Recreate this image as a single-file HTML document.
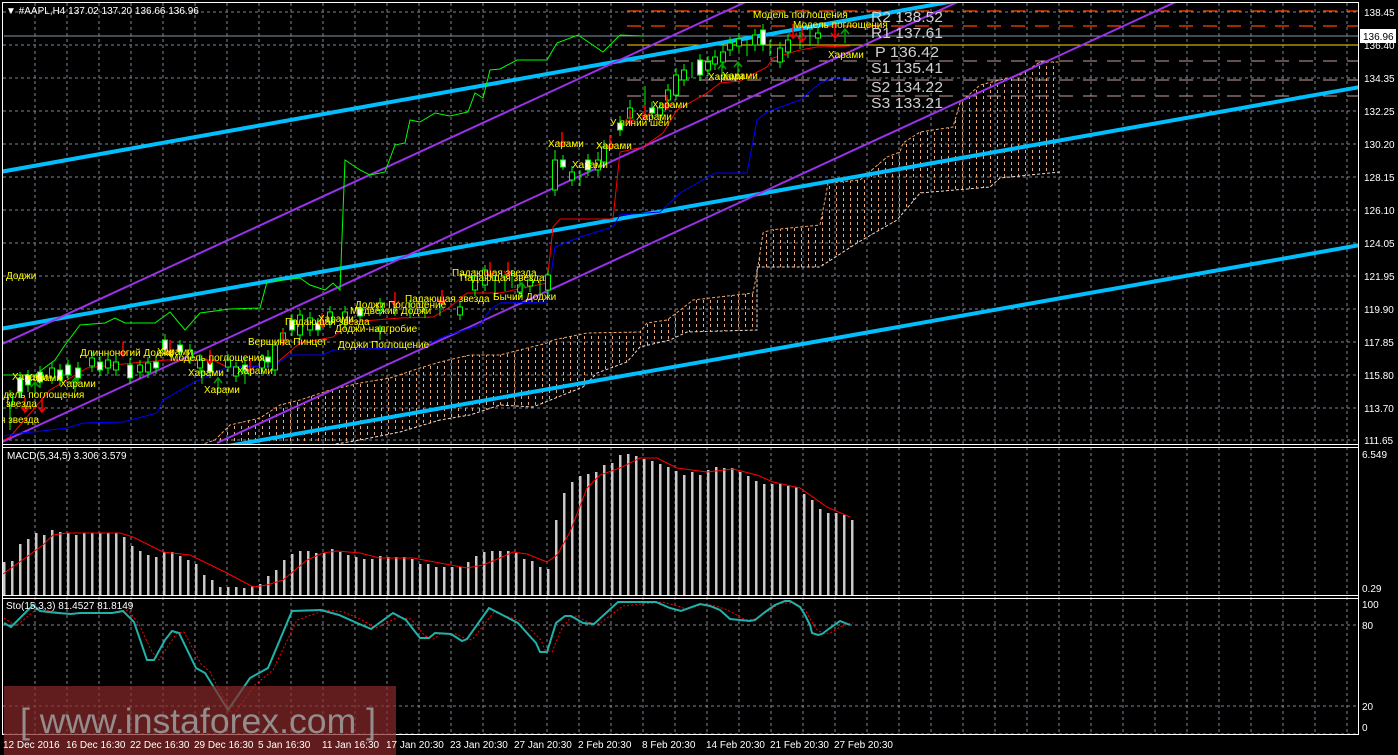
<!DOCTYPE html>
<html><head><meta charset="utf-8"><style>
html,body{margin:0;padding:0;background:#000;}
svg{display:block}
text{font-family:"Liberation Sans",sans-serif;}
</style></head><body>
<svg width="1398" height="755" viewBox="0 0 1398 755" xmlns="http://www.w3.org/2000/svg">
<defs>
<pattern id="cl" patternUnits="userSpaceOnUse" width="7" height="6"><rect x="3" y="0" width="1" height="3" fill="#e8a878"/></pattern>
<clipPath id="mainclip"><rect x="3" y="3" width="1355" height="441"/></clipPath>
</defs>
<rect width="1398" height="755" fill="#000"/>

<!-- grid -->
<g stroke="#7c8696" stroke-width="1" stroke-dasharray="3,3" fill="none">
<path d="M35 3V734M67 3V734M99 3V734M131 3V734M163 3V734M195 3V734M227 3V734M259 3V734M291 3V734M323 3V734M355 3V734M387 3V734M419 3V734M451 3V734M483 3V734M515 3V734M547 3V734M579 3V734M611 3V734M643 3V734M675 3V734M707 3V734M739 3V734M771 3V734M803 3V734M835 3V734M867 3V734M899 3V734M931 3V734M963 3V734M995 3V734M1027 3V734M1059 3V734M1091 3V734M1123 3V734M1155 3V734M1187 3V734M1219 3V734M1251 3V734M1283 3V734M1315 3V734M1347 3V734"/>
<path d="M3 12H1358M3 45H1358M3 78H1358M3 111H1358M3 144H1358M3 177H1358M3 210H1358M3 243H1358M3 276H1358M3 309H1358M3 342H1358M3 375H1358M3 408H1358M3 440H1358"/>
<path d="M3 625H1358M3 706H1358M3 734H1358"/>
</g>

<g clip-path="url(#mainclip)">
<polygon fill="url(#cl)" points="200,445 215,440 230,425 260,418 280,405 300,400 330,390 360,383 390,378 420,368 440,362 470,355 500,355 547,343 553,340 587,333 640,332 647,323 667,320 683,308 693,300 753,293 757,273 763,233 770,230 820,225 825,200 828,183 860,180 887,157 900,152 903,143 920,132 953,127 960,103 980,85 1000,80 1020,75 1040,62 1060,62 1060,172 1000,178 990,187 920,193 897,220 857,243 820,267 757,267 757,330 687,332 670,340 640,347 627,362 597,373 583,387 533,407 500,405 470,415 440,420 400,432 360,440 330,445"/>
<polyline fill="none" stroke="#f4a460" stroke-dasharray="3,2" points="200,445 215,440 230,425 260,418 280,405 300,400 330,390 360,383 390,378 420,368 440,362 470,355 500,355 547,343 553,340 587,333 640,332 647,323 667,320 683,308 693,300 753,293 757,273 763,233 770,230 820,225 825,200 828,183 860,180 887,157 900,152 903,143 920,132 953,127 960,103 980,85 1000,80 1020,75 1040,62 1060,62"/>
<polyline fill="none" stroke="#f0d8d0" stroke-dasharray="3,2" points="1060,172 1000,178 990,187 920,193 897,220 857,243 820,267 757,267 757,330 687,332 670,340 640,347 627,362 597,373 583,387 533,407 500,405 470,415 440,420 400,432 360,440 330,445"/>

<path d="M627 11H1358M627 26H1358" stroke="#ff4500" stroke-width="1.3" stroke-dasharray="14,10"/>
<path d="M4 36H1358" stroke="#8494a4" stroke-width="1"/>
<path d="M627 45H1358" stroke="#ffd700" stroke-width="1"/>
<path d="M627 61H1358M627 80H1358M627 96H1358" stroke="#c8a0a0" stroke-width="1" stroke-dasharray="14,10"/>

<g stroke="#00bfff" stroke-width="4" fill="none">
<line x1="0" y1="172" x2="960" y2="0"/>
<line x1="0" y1="329" x2="1360" y2="87"/>
<line x1="228" y1="446" x2="1360" y2="245"/>
</g>
<g stroke="#9932e8" stroke-width="2" fill="none">
<line x1="0" y1="345" x2="750" y2="0"/>
<line x1="0" y1="443" x2="962" y2="0"/>
<line x1="217" y1="443" x2="1180" y2="0"/>
</g>

<polyline fill="none" stroke="#00ff00" stroke-width="1" points="4,375 35,375 55,360 65,345 80,325 105,323 115,318 125,323 155,323 170,312 185,330 200,313 230,309 260,308 267,282 300,278 310,285 325,290 333,283 340,290 345,160 360,170 370,175 385,172 395,145 405,143 410,120 420,122 435,113 450,116 468,112 475,93 483,98 490,70 500,69 517,60 547,60 557,43 578,35 603,52 620,35 643,36"/>
<polyline fill="none" stroke="#ff0000" stroke-width="1" points="4,440 10,437 33,410 50,390 87,368 133,363 167,360 213,360 227,367 273,366 300,343 333,337 350,322 400,318 433,317 450,307 467,293 500,293 547,283 553,227 560,219 613,219 620,152 643,147 663,133 677,110 707,93 720,83 740,81 767,67 773,58 800,50 817,47 850,46"/>
<polyline fill="none" stroke="#0000ff" stroke-width="1" points="4,436 20,433 33,432 67,428 83,423 123,422 157,413 163,400 193,383 227,367 273,366 290,355 323,355 333,350 423,347 443,337 480,325 490,310 500,303 547,302 555,247 580,237 613,227 620,215 660,212 680,193 715,173 747,173 757,120 767,112 800,100 820,83 830,79 850,79"/>

<g stroke="#00ff00" stroke-width="1">
<path d="M10 390V430M20 372V398M28 370V392M40 366V388M52 362V384M60 364V386M68 360V380M78 362V384M92 352V372M100 356V376M108 354V374M116 356V376M130 358V384M140 360V378M148 357V378M156 356V374M165 334V356M180 340V358M190 344V364M200 354V374M210 356V378M228 354V372M236 362V382M245 358V378M262 354V374M268 350V368M275 340V376M283 328V346M292 314V336M300 310V340M310 312V336M318 318V336M330 306V328M345 306V330M360 302V322M380 298V316M395 300V316M410 300V318M425 302V318M440 300V316M460 302V320M475 270V296M485 265V291M495 275V296M505 274V291M512 270V288M520 280V298M530 274V292M540 280V298M548 270V296M555 150V196M563 155V170M572 166V186M580 170V186M588 154V176M598 152V176M604 140V168M620 116V136M630 100V124M645 86V106M652 102V118M660 102V121M668 84V106M676 68V100M684 64V86M692 62V78M700 54V81M708 56V76M715 50V70M723 46V68M730 37V56M739 33V52M747 40V56M755 29V51M763 24V51M770 40V56M780 42V68M788 34V58M800 32V49M810 29V46M818 27V44"/>
</g>
<g stroke="#00ff00" stroke-width="1">
<rect x="7.5" y="395" width="5" height="10" fill="#000"/><rect x="17.5" y="378" width="5" height="14" fill="#fff"/><rect x="25.5" y="375" width="5" height="10" fill="#fff"/><rect x="37.5" y="372" width="5" height="10" fill="#fff"/><rect x="49.5" y="368" width="5" height="10" fill="#000"/><rect x="57.5" y="370" width="5" height="10" fill="#fff"/><rect x="65.5" y="365" width="5" height="10" fill="#fff"/><rect x="75.5" y="368" width="5" height="10" fill="#fff"/><rect x="89.5" y="358" width="5" height="8" fill="#000"/><rect x="97.5" y="362" width="5" height="8" fill="#fff"/><rect x="105.5" y="360" width="5" height="8" fill="#000"/><rect x="113.5" y="362" width="5" height="8" fill="#000"/><rect x="127.5" y="365" width="5" height="13" fill="#fff"/><rect x="137.5" y="365" width="5" height="7" fill="#000"/><rect x="145.5" y="363" width="5" height="9" fill="#000"/><rect x="153.5" y="362" width="5" height="6" fill="#fff"/><rect x="162.5" y="340" width="5" height="10" fill="#fff"/><rect x="177.5" y="345" width="5" height="7" fill="#fff"/><rect x="187.5" y="350" width="5" height="8" fill="#000"/><rect x="197.5" y="360" width="5" height="8" fill="#000"/><rect x="207.5" y="362" width="5" height="10" fill="#fff"/><rect x="225.5" y="360" width="5" height="7" fill="#000"/><rect x="233.5" y="367" width="5" height="9" fill="#000"/><rect x="242.5" y="365" width="5" height="7" fill="#fff"/><rect x="259.5" y="360" width="5" height="8" fill="#000"/><rect x="265.5" y="357" width="5" height="5" fill="#fff"/><rect x="272.5" y="345" width="5" height="25" fill="#000"/><rect x="280.5" y="333" width="5" height="7" fill="#000"/><rect x="289.5" y="320" width="5" height="10" fill="#fff"/><rect x="297.5" y="315" width="5" height="20" fill="#000"/><rect x="307.5" y="318" width="5" height="12" fill="#000"/><rect x="315.5" y="323" width="5" height="7" fill="#fff"/><rect x="327.5" y="312" width="5" height="10" fill="#000"/><rect x="342.5" y="312" width="5" height="12" fill="#000"/><rect x="357.5" y="308" width="5" height="8" fill="#fff"/><rect x="377.5" y="303" width="5" height="7" fill="#000"/><rect x="457.5" y="307" width="5" height="8" fill="#000"/><rect x="472.5" y="276" width="5" height="14" fill="#000"/><rect x="482.5" y="270" width="5" height="15" fill="#000"/><rect x="517.5" y="285" width="5" height="7" fill="#000"/><rect x="527.5" y="280" width="5" height="6" fill="#000"/><rect x="545.5" y="275" width="5" height="15" fill="#000"/><rect x="552.5" y="160" width="5" height="30" fill="#000"/><rect x="560.5" y="160" width="5" height="7" fill="#fff"/><rect x="569.5" y="172" width="5" height="8" fill="#000"/><rect x="585.5" y="160" width="5" height="10" fill="#fff"/><rect x="595.5" y="160" width="5" height="10" fill="#000"/><rect x="601.5" y="147" width="5" height="15" fill="#000"/><rect x="617.5" y="123" width="5" height="7" fill="#fff"/><rect x="627.5" y="108" width="5" height="10" fill="#000"/><rect x="649.5" y="108" width="5" height="5" fill="#fff"/><rect x="657.5" y="108" width="5" height="7" fill="#000"/><rect x="665.5" y="90" width="5" height="10" fill="#000"/><rect x="673.5" y="75" width="5" height="20" fill="#000"/><rect x="681.5" y="70" width="5" height="10" fill="#000"/><rect x="697.5" y="60" width="5" height="15" fill="#fff"/><rect x="705.5" y="62" width="5" height="8" fill="#000"/><rect x="712.5" y="57" width="5" height="7" fill="#000"/><rect x="720.5" y="52" width="5" height="10" fill="#000"/><rect x="727.5" y="43" width="5" height="7" fill="#000"/><rect x="736.5" y="39" width="5" height="7" fill="#000"/><rect x="752.5" y="35" width="5" height="10" fill="#000"/><rect x="760.5" y="30" width="5" height="15" fill="#fff"/><rect x="777.5" y="48" width="5" height="14" fill="#000"/><rect x="785.5" y="40" width="5" height="12" fill="#000"/><rect x="815.5" y="33" width="5" height="5" fill="#000"/>
</g>

<g stroke="#ff0000" stroke-width="1.5" fill="none">
<path d="M25 398v14m-4 -5l4 5l4-5M42 398v14m-4 -5l4 5l4-5M123 342v14m-4 -5l4 5l4-5M170 340v14m-4 -5l4 5l4-5M210 350v14m-4 -5l4 5l4-5M250 358v14m-4 -5l4 5l4-5M283 330v14m-4 -5l4 5l4-5M322 313v14m-4 -5l4 5l4-5M395 292v14m-4 -5l4 5l4-5M442 290v14m-4 -5l4 5l4-5M490 262v14m-4 -5l4 5l4-5M508 262v14m-4 -5l4 5l4-5M562 132v14m-4 -5l4 5l4-5M610 135v14m-4 -5l4 5l4-5M630 110v14m-4 -5l4 5l4-5M645 105v14m-4 -5l4 5l4-5M667 95v14m-4 -5l4 5l4-5M793 24v14m-4 -5l4 5l4-5M802 28v14m-4 -5l4 5l4-5M835 24v14m-4 -5l4 5l4-5"/>
</g>
<g stroke="#00a000" stroke-width="1.5" fill="none">
<path d="M35 396v-14m-4 5l4-5l4 5M75 392v-14m-4 5l4-5l4 5M202 384v-14m-4 5l4-5l4 5M218 392v-14m-4 5l4-5l4 5M245 384v-14m-4 5l4-5l4 5M380 340v-14m-4 5l4-5l4 5M522 297v-14m-4 5l4-5l4 5M722 78v-14m-4 5l4-5l4 5M738 76v-14m-4 5l4-5l4 5M845 43v-14m-4 5l4-5l4 5"/>
</g>

<g fill="#ffff00" font-size="10">
<text x="6" y="279">Доджи</text>
<text x="12" y="380">Харами</text><text x="26" y="381">Харами</text>
<text x="60" y="387">Харами</text>
<text x="-2" y="398">одель поглощения</text>
<text x="6" y="407">звезда</text>
<text x="0" y="423">я звезда</text>
<text x="80" y="356">Длинноногий Доджи</text>
<text x="157" y="355">Харами</text>
<text x="170" y="361">Модель поглощения</text>
<text x="188" y="376">Харами</text>
<text x="204" y="393">Харами</text>
<text x="237" y="374">Харами</text>
<text x="248" y="345">Вершина Пинцет</text>
<text x="285" y="325">Падающая звезда</text>
<text x="318" y="322">Харами</text>
<text x="335" y="332">Доджи-надгробие</text>
<text x="338" y="348">Доджи Поглощение</text>
<text x="355" y="308">Доджи Поглощение</text>
<text x="350" y="314">Медвежий Доджи</text>
<text x="405" y="302">Падающая звезда</text>
<text x="452" y="276">Падающая звезда</text>
<text x="460" y="281">Падающая звезда</text>
<text x="493" y="300">Бычий Доджи</text>
<text x="548" y="147">Харами</text>
<text x="572" y="168">Харами</text>
<text x="596" y="149">Харами</text>
<text x="610" y="126">У линии шеи</text>
<text x="636" y="120">Харами</text>
<text x="652" y="108">Харами</text>
<text x="708" y="80">Харами</text>
<text x="722" y="79">Харами</text>
<text x="753" y="18">Модель поглощения</text>
<text x="793" y="28">Модель поглощения</text>
<text x="828" y="58">Харами</text>
</g>

<g fill="#cfcfcf" font-family="Liberation Mono, monospace" font-size="15">
<text x="871" y="22" textLength="72" lengthAdjust="spacingAndGlyphs">R2 138.52</text>
<text x="871" y="38" textLength="72" lengthAdjust="spacingAndGlyphs">R1 137.61</text>
<text x="875" y="57" textLength="64" lengthAdjust="spacingAndGlyphs">P 136.42</text>
<text x="871" y="73" textLength="72" lengthAdjust="spacingAndGlyphs">S1 135.41</text>
<text x="871" y="92" textLength="72" lengthAdjust="spacingAndGlyphs">S2 134.22</text>
<text x="871" y="108" textLength="72" lengthAdjust="spacingAndGlyphs">S3 133.21</text>
</g>
</g>

<!-- MACD -->
<g fill="#c8c8c8">
<rect x="3" y="562" width="2.5" height="33"/><rect x="11" y="561" width="2.5" height="34"/><rect x="19" y="544" width="2.5" height="51"/><rect x="27" y="539" width="2.5" height="56"/><rect x="35" y="533" width="2.5" height="62"/><rect x="43" y="535" width="2.5" height="60"/><rect x="51" y="530" width="2.5" height="65"/><rect x="59" y="532" width="2.5" height="63"/><rect x="67" y="533" width="2.5" height="62"/><rect x="75" y="535" width="2.5" height="60"/><rect x="83" y="533" width="2.5" height="62"/><rect x="91" y="533" width="2.5" height="62"/><rect x="99" y="533" width="2.5" height="62"/><rect x="107" y="533" width="2.5" height="62"/><rect x="115" y="533" width="2.5" height="62"/><rect x="123" y="537" width="2.5" height="58"/><rect x="131" y="546" width="2.5" height="49"/><rect x="139" y="551" width="2.5" height="44"/><rect x="147" y="555" width="2.5" height="40"/><rect x="155" y="557" width="2.5" height="38"/><rect x="163" y="552" width="2.5" height="43"/><rect x="171" y="552" width="2.5" height="43"/><rect x="179" y="556" width="2.5" height="39"/><rect x="187" y="560" width="2.5" height="35"/><rect x="195" y="564" width="2.5" height="31"/><rect x="203" y="575" width="2.5" height="20"/><rect x="211" y="580" width="2.5" height="15"/><rect x="219" y="587" width="2.5" height="8"/><rect x="227" y="587" width="2.5" height="8"/><rect x="235" y="587" width="2.5" height="8"/><rect x="243" y="588" width="2.5" height="7"/><rect x="251" y="586" width="2.5" height="9"/><rect x="259" y="584" width="2.5" height="11"/><rect x="267" y="576" width="2.5" height="19"/><rect x="275" y="570" width="2.5" height="25"/><rect x="283" y="560" width="2.5" height="35"/><rect x="291" y="554" width="2.5" height="41"/><rect x="299" y="551" width="2.5" height="44"/><rect x="307" y="551" width="2.5" height="44"/><rect x="315" y="553" width="2.5" height="42"/><rect x="323" y="553" width="2.5" height="42"/><rect x="331" y="549" width="2.5" height="46"/><rect x="339" y="552" width="2.5" height="43"/><rect x="347" y="555" width="2.5" height="40"/><rect x="355" y="557" width="2.5" height="38"/><rect x="363" y="559" width="2.5" height="36"/><rect x="371" y="559" width="2.5" height="36"/><rect x="379" y="556" width="2.5" height="39"/><rect x="387" y="557" width="2.5" height="38"/><rect x="395" y="557" width="2.5" height="38"/><rect x="403" y="557" width="2.5" height="38"/><rect x="411" y="559" width="2.5" height="36"/><rect x="419" y="564" width="2.5" height="31"/><rect x="427" y="564" width="2.5" height="31"/><rect x="435" y="567" width="2.5" height="28"/><rect x="443" y="567" width="2.5" height="28"/><rect x="451" y="567" width="2.5" height="28"/><rect x="459" y="567" width="2.5" height="28"/><rect x="467" y="562" width="2.5" height="33"/><rect x="475" y="556" width="2.5" height="39"/><rect x="483" y="552" width="2.5" height="43"/><rect x="491" y="551" width="2.5" height="44"/>
<rect x="499" y="551" width="2.5" height="44"/><rect x="507" y="551" width="2.5" height="44"/><rect x="515" y="553" width="2.5" height="42"/><rect x="523" y="559" width="2.5" height="36"/><rect x="531" y="561" width="2.5" height="34"/><rect x="539" y="567" width="2.5" height="28"/><rect x="547" y="569" width="2.5" height="26"/><rect x="555" y="520" width="2.5" height="75"/><rect x="563" y="493" width="2.5" height="102"/><rect x="571" y="482" width="2.5" height="113"/><rect x="579" y="476" width="2.5" height="119"/><rect x="587" y="474" width="2.5" height="121"/><rect x="595" y="472" width="2.5" height="123"/><rect x="603" y="465" width="2.5" height="130"/><rect x="611" y="463" width="2.5" height="132"/><rect x="619" y="455" width="2.5" height="140"/><rect x="627" y="454" width="2.5" height="141"/><rect x="635" y="456" width="2.5" height="139"/><rect x="643" y="459" width="2.5" height="136"/><rect x="651" y="461" width="2.5" height="134"/><rect x="659" y="464" width="2.5" height="131"/><rect x="667" y="467" width="2.5" height="128"/><rect x="675" y="471" width="2.5" height="124"/><rect x="683" y="475" width="2.5" height="120"/><rect x="691" y="472" width="2.5" height="123"/><rect x="699" y="475" width="2.5" height="120"/><rect x="707" y="470" width="2.5" height="125"/><rect x="715" y="467" width="2.5" height="128"/><rect x="723" y="468" width="2.5" height="127"/><rect x="731" y="468" width="2.5" height="127"/><rect x="739" y="472" width="2.5" height="123"/><rect x="747" y="476" width="2.5" height="119"/><rect x="755" y="481" width="2.5" height="114"/><rect x="763" y="484" width="2.5" height="111"/><rect x="771" y="484" width="2.5" height="111"/><rect x="779" y="484" width="2.5" height="111"/><rect x="787" y="486" width="2.5" height="109"/><rect x="795" y="487" width="2.5" height="108"/><rect x="803" y="494" width="2.5" height="101"/><rect x="811" y="500" width="2.5" height="95"/><rect x="819" y="509" width="2.5" height="86"/><rect x="827" y="513" width="2.5" height="82"/><rect x="835" y="513" width="2.5" height="82"/><rect x="843" y="515" width="2.5" height="80"/><rect x="851" y="520" width="2.5" height="75"/>
</g>
<polyline fill="none" stroke="#ff0000" stroke-width="1" points="3,574 43,545 53,535 67,533 120,533 133,537 163,552 190,555 227,573 253,587 267,585 283,580 307,560 323,553 337,551 360,553 380,558 413,558 440,563 467,568 483,565 500,558 513,552 527,554 547,562 557,555 570,532 587,488 600,475 620,468 640,458 657,458 677,468 707,472 733,469 757,475 773,482 800,488 827,507 850,517"/>

<!-- Stochastic -->
<polyline fill="none" stroke="#ff0000" stroke-width="1" stroke-dasharray="2,2" points="4,618 16,626 38,608 45,610 63,613 76,614 85,613 117,613 128,610 139,624 152,652 159,660 170,643 177,633 184,632 201,664 210,672 233,716 255,685 273,670 297,620 326,610 344,612 362,620 376,628 398,617 411,619 425,636 434,639 440,634 456,634 467,639 472,640 494,612 523,622 541,640 545,650 552,652 561,630 570,618 576,616 588,622 599,624 623,606 661,602 675,605 686,609 705,604 715,606 725,609 735,614 745,620 755,619 770,610 780,603 795,603 805,610 812,622 817,630 825,634 832,632 840,627 848,624 853,623"/>
<polyline fill="none" stroke="#20b2aa" stroke-width="2" points="4,623 11,627 33,605 40,611 58,613 71,614 80,613 112,613 123,611 134,622 147,660 154,660 165,640 172,631 179,633 196,668 205,673 228,710 250,678 268,668 292,611 321,610 339,615 357,623 371,629 393,613 406,620 420,638 429,638 435,633 451,634 462,641 467,639 489,608 518,623 536,643 540,652 547,652 556,623 565,616 571,616 583,623 594,624 618,602 656,602 670,608 681,611 700,604 710,606 720,610 730,619 740,620 750,621 755,620 765,612 775,605 785,601 790,601 800,607 805,615 810,625 812,633 818,635 822,634 830,628 840,621 845,623 850,625"/>

<g stroke="#ffffff" stroke-width="1" fill="none">
<path d="M2.5 2.5H1358.5V734.5H2.5Z"/>
<path d="M2.5 444.5H1358.5M2.5 447.5H1358.5M2.5 595.5H1358.5M2.5 598.5H1358.5"/>
</g>

<g fill="#ffffff" font-size="10">
<text x="6" y="14">▼ #AAPL,H4  137.02 137.20 136.66 136.96</text>
<text x="7" y="459">MACD(5,34,5) 3.306 3.579</text>
<text x="6" y="609">Sto(15,3,3) 81.4527 81.8149</text>
</g>

<g fill="#ffffff" font-size="10">
<text x="1364" y="16">138.45</text>
<text x="1364" y="49">136.40</text>
<text x="1364" y="82">134.35</text>
<text x="1364" y="115">132.25</text>
<text x="1364" y="148">130.20</text>
<text x="1364" y="181">128.15</text>
<text x="1364" y="214">126.10</text>
<text x="1364" y="247">124.05</text>
<text x="1364" y="280">121.95</text>
<text x="1364" y="313">119.90</text>
<text x="1364" y="346">117.85</text>
<text x="1364" y="379">115.80</text>
<text x="1364" y="412">113.70</text>
<text x="1364" y="444">111.65</text>
<text x="1362" y="458">6.549</text>
<text x="1362" y="592">0.29</text>
<text x="1362" y="608">100</text>
<text x="1362" y="629">80</text>
<text x="1362" y="710">20</text>
<text x="1362" y="731">0</text>
</g>
<rect x="1360" y="29" width="36" height="14" fill="#ffffff"/>
<text x="1363" y="40" font-size="10" fill="#000">136.96</text>

<rect x="4" y="686" width="392" height="69" fill="#8a2a2a" fill-opacity="0.7"/>
<text x="20" y="733" font-size="35" fill="#9a9a9a" fill-opacity="0.9" textLength="356" lengthAdjust="spacingAndGlyphs">[ www.instaforex.com ]</text>

<g fill="#ffffff" font-size="10">
<text x="3" y="748">12 Dec 2016</text>
<text x="66" y="748">16 Dec 16:30</text>
<text x="130" y="748">22 Dec 16:30</text>
<text x="194" y="748">29 Dec 16:30</text>
<text x="258" y="748">5 Jan 16:30</text>
<text x="322" y="748">11 Jan 16:30</text>
<text x="386" y="748">17 Jan 20:30</text>
<text x="450" y="748">23 Jan 20:30</text>
<text x="514" y="748">27 Jan 20:30</text>
<text x="578" y="748">2 Feb 20:30</text>
<text x="642" y="748">8 Feb 20:30</text>
<text x="706" y="748">14 Feb 20:30</text>
<text x="770" y="748">21 Feb 20:30</text>
<text x="834" y="748">27 Feb 20:30</text>
</g>
</svg>
</body></html>
